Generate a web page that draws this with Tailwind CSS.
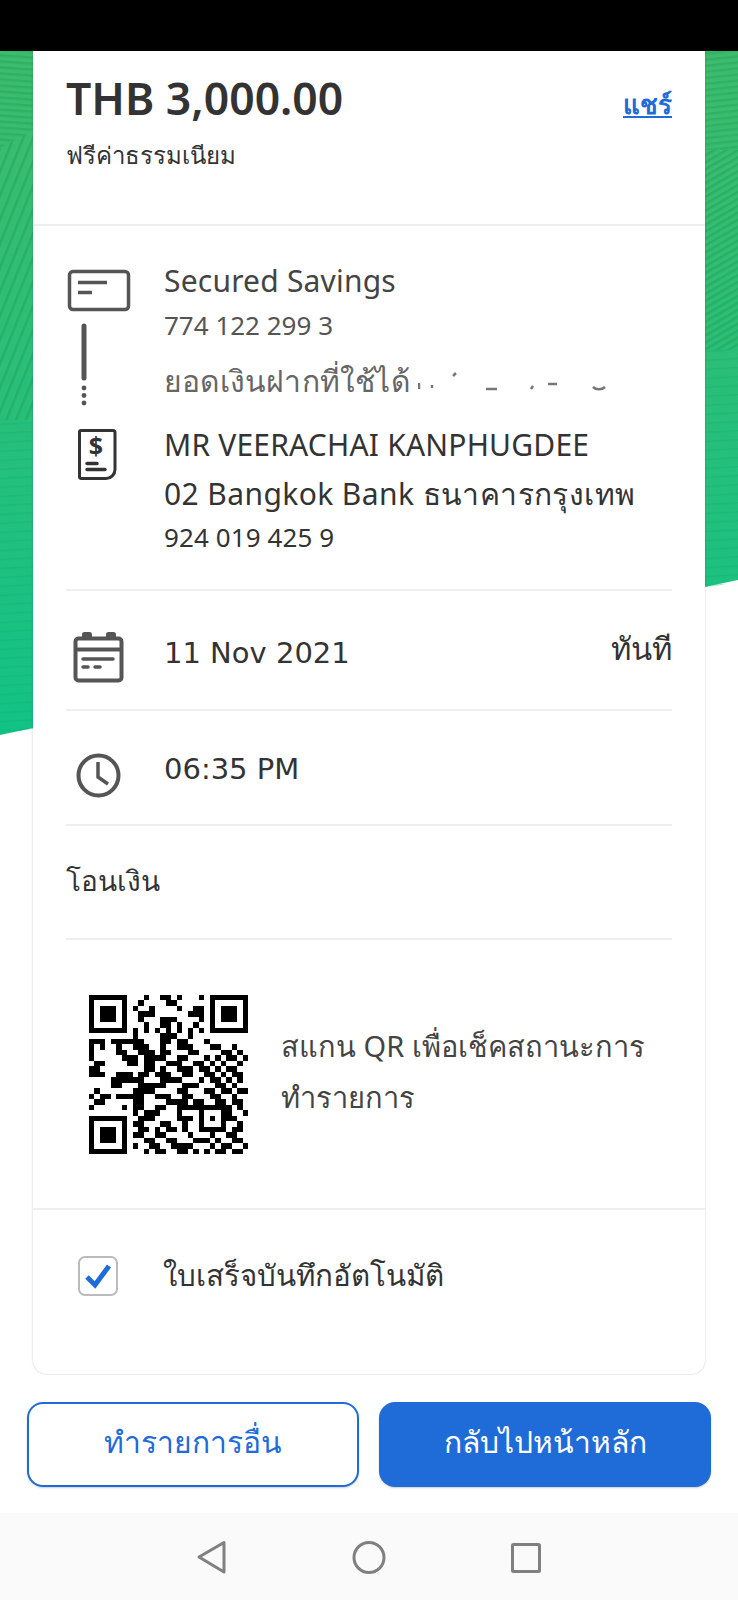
<!DOCTYPE html>
<html lang="th">
<head>
    <meta charset="UTF-8">
    <meta name="viewport" content="width=device-width, initial-scale=1.0">
    <title>โอนเงิน</title>
    <script src="https://cdn.jsdelivr.net/npm/@tailwindcss/browser@4"></script>
</head>
<body class="bg-white">
<div class="relative flex h-[1600px] w-[738px] flex-col overflow-hidden bg-white font-['Noto_Sans','Open_Sans','DejaVu_Sans',sans-serif] text-[#333]">
    <!-- top bar -->
    <div class="relative z-10 h-[51px] shrink-0 bg-black"></div>

    <!-- green background, only the side strips show -->
    <svg class="absolute left-0 top-0" width="738" height="760" viewBox="0 0 738 760">
        <defs>
            <linearGradient id="bgGreen" x1="0" y1="51" x2="0" y2="735" gradientUnits="userSpaceOnUse">
                <stop offset="0" stop-color="#3fbb6c"/>
                <stop offset="1" stop-color="#12c285"/>
            </linearGradient>
            <pattern id="flat" width="6" height="6" patternUnits="userSpaceOnUse" patternTransform="rotate(4)">
                <rect width="6" height="2.5" fill="#1fa95c" fill-opacity="0.55"/>
            </pattern>
            <pattern id="flatR" width="6" height="6" patternUnits="userSpaceOnUse" patternTransform="rotate(-6)">
                <rect width="6" height="2.5" fill="#1fa95c" fill-opacity="0.5"/>
            </pattern>
            <pattern id="steep" width="9" height="9" patternUnits="userSpaceOnUse" patternTransform="rotate(22)">
                <rect width="2.5" height="9" fill="#1fa95c" fill-opacity="0.6"/>
            </pattern>
            <pattern id="diag" width="6" height="6" patternUnits="userSpaceOnUse" patternTransform="rotate(-30)">
                <rect width="6" height="2.5" fill="#1fa95c" fill-opacity="0.6"/>
            </pattern>
            <pattern id="soft" width="9" height="9" patternUnits="userSpaceOnUse" patternTransform="rotate(-3)">
                <rect width="9" height="1.5" fill="#0fae76" fill-opacity="0.35"/>
            </pattern>
        </defs>
        <polygon points="0,51 738,51 738,580 0,735" fill="url(#bgGreen)"/>
        <polygon points="0,51 33,51 33,130 0,148" fill="url(#flat)"/>
        <polygon points="0,148 33,130 33,420 0,420" fill="url(#steep)"/>
        <polygon points="0,420 33,420 33,729 0,735" fill="url(#soft)"/>
        <polygon points="705,51 738,51 738,150 705,150" fill="url(#flatR)"/>
        <polygon points="705,150 738,150 738,350 705,350" fill="url(#diag)"/>
        <polygon points="705,350 738,350 738,580 705,590" fill="url(#soft)"/>
    </svg>

    <!-- card -->
    <main class="relative mx-[33px] flex h-[1323px] shrink-0 flex-col overflow-hidden rounded-b-[14px] bg-white shadow-[0_0_2px_rgba(0,0,0,0.25)]">
        <!-- amount -->
        <section class="flex h-[175px] shrink-0 items-start justify-between border-b-2 border-[#eee] px-[33px] pt-[17px]">
            <div>
                <p class="text-[44.500px] leading-[60px] font-semibold text-[#333]">THB 3,000.00</p>
                <p class="mt-[9px] text-[24px] leading-[36px] text-[#333]">ฟรีค่าธรรมเนียม</p>
            </div>
            <a class="mt-[16px] text-[26px] leading-[40px] font-semibold text-[#1f6bd8] underline underline-offset-2">แชร์</a>
        </section>

        <div class="flex shrink-0 flex-col px-[33px]">
            <!-- from / to -->
            <section class="flex h-[365px] border-b-2 border-[#eee] pt-[35px]">
                <div class="w-[98px] shrink-0">
                    <svg width="66" height="212" viewBox="0 0 66 212" class="mt-[1px] overflow-visible" fill="none">
                        <rect x="3.500" y="9.500" width="59" height="38" rx="3.500" stroke="#555" stroke-width="3.500"/>
                        <path d="M12 20.500h29M12 30.500h14" stroke="#555" stroke-width="3.500"/>
                        <path d="M18 64v52" stroke="#555" stroke-width="5" stroke-linecap="round"/>
                        <circle cx="18" cy="126" r="2.400" fill="#555"/>
                        <circle cx="18" cy="133.500" r="2.400" fill="#555"/>
                        <circle cx="18" cy="141" r="2.400" fill="#555"/>
                        <path d="M15 168.500h32a2 2 0 0 1 2 2v37a9 9 0 0 1-9 9h-25a1.500 1.500 0 0 1-1.500-1.500v-45a1.500 1.500 0 0 1 1.500-1.500z" stroke="#333" stroke-width="3"/>
                        <text x="30" y="193" text-anchor="middle" font-size="25" font-weight="700" fill="#333">$</text>
                        <path d="M21 201.500h10M21 207.500h18" stroke="#333" stroke-width="3.500" stroke-linecap="round"/>
                    </svg>
                </div>
                <div class="min-w-0">
                    <p class="text-[30px] leading-[40px] tracking-[0.2px] text-[#444]">Secured Savings</p>
                    <p class="text-[26px] leading-[48px] text-[#555]">774 122 299 3</p>
                    <div class="relative">
                        <p class="text-[30px] leading-[64px] tracking-[0.2px] text-[#666]">ยอดเงินฝากที่ใช้ได้</p>
                        <svg class="absolute left-[254px] top-[21px]" width="192" height="22" viewBox="0 0 192 22" fill="none" stroke="#777" stroke-width="2.500">
                            <path d="M1 13v6M14 15v3M38 3l-3 3M68 19h11M115 16l-2 3M130 14h9M175 17c3 3 9 3 12 0"/>
                        </svg>
                    </div>
                    <p class="mt-[1px] text-[30px] leading-[62px] tracking-[0.2px] text-[#333]">MR VEERACHAI KANPHUGDEE</p>
                    <p class="text-[30px] leading-[36px] tracking-[0.4px] text-[#333]">02 Bangkok Bank ธนาคารกรุงเทพ</p>
                    <p class="text-[26px] leading-[51px] tracking-[0.1px] text-[#333]">924 019 425 9</p>
                </div>
            </section>

            <!-- date -->
            <section class="flex h-[120px] items-start justify-between border-b-2 border-[#eee]">
                <div class="flex">
                    <div class="w-[98px] shrink-0 pt-[41px]">
                        <svg width="66" height="50" viewBox="0 0 66 50" fill="none" class="overflow-visible">
                            <rect x="9.500" y="6.500" width="46" height="42" rx="3" stroke="#555" stroke-width="4"/>
                            <path d="M8 17.500h49" stroke="#555" stroke-width="4"/>
                            <rect x="16" y="0" width="10" height="8" rx="2.500" fill="#555"/>
                            <rect x="40" y="0" width="10" height="8" rx="2.500" fill="#555"/>
                            <path d="M17 27h30" stroke="#555" stroke-width="3.500" stroke-linecap="round"/>
                            <path d="M17 35h5M29 35h5" stroke="#555" stroke-width="3.500" stroke-linecap="round"/>
                        </svg>
                    </div>
                    <p class="pt-[42px] font-['DejaVu_Sans',sans-serif] text-[29px] leading-[40px] text-[#333]">11 Nov 2021</p>
                </div>
                <p class="pt-[36px] text-[31px] leading-[42px] text-[#333]">ทันที</p>
            </section>

            <!-- time -->
            <section class="flex h-[115px] border-b-2 border-[#eee]">
                <div class="w-[98px] shrink-0 pt-[42px]">
                    <svg width="66" height="44" viewBox="0 0 66 44" fill="none" class="overflow-visible">
                        <circle cx="32.500" cy="22.500" r="20" stroke="#555" stroke-width="4"/>
                        <path d="M32 9v15l10 7" stroke="#555" stroke-width="3.500"/>
                    </svg>
                </div>
                <p class="pt-[38px] font-['DejaVu_Sans',sans-serif] text-[29px] leading-[40px] text-[#333]">06:35 PM</p>
            </section>

            <!-- type -->
            <section class="flex h-[114px] items-center border-b-2 border-[#eee] pb-[5px]">
                <p class="text-[28px] leading-[44px] text-[#333]">โอนเงิน</p>
            </section>
        </div>

        <!-- qr -->
        <section class="flex h-[270px] shrink-0 items-start border-b-2 border-[#eee] pl-[56px] pr-[33px] pt-[55px]">
            <svg width="159" height="159" viewBox="0 0 29 29" shape-rendering="crispEdges" class="shrink-0">
                <path id="qr" fill="#000"/>
            </svg>
            <div class="ml-[33px] pt-[25px] text-[29px] leading-[51px] text-[#444]">
                <p>สแกน QR เพื่อเช็คสถานะการ</p>
                <p>ทำรายการ</p>
            </div>
        </section>

        <!-- auto receipt -->
        <section class="flex flex-1 items-start px-[45px] pt-[46px]">
            <span class="flex h-[40px] w-[40px] shrink-0 items-center justify-center rounded-[7px] border-2 border-[#bbb] bg-white">
                <svg width="30" height="30" viewBox="0 0 30 30" fill="none">
                    <path d="M4 16l8 8L26 5" stroke="#1f6bd8" stroke-width="5"/>
                </svg>
            </span>
            <p class="ml-[45px] text-[29.500px] leading-[38px] text-[#333]">ใบเสร็จบันทึกอัตโนมัติ</p>
        </section>
    </main>

    <!-- buttons -->
    <div class="relative mt-[28px] flex h-[85px] shrink-0 gap-[20px] px-[27px]">
        <button class="h-full w-[332px] rounded-[16px] border-2 border-[#1f6bd8] bg-white pb-[6px] text-[30px] text-[#1f6bd8] shadow-[0_1px_2px_rgba(0,0,0,0.2)]">ทำรายการอื่น</button>
        <button class="h-full w-[332px] rounded-[16px] bg-[#1f6bd8] pb-[6px] text-[30px] text-white shadow-[0_1px_2px_rgba(0,0,0,0.2)]">กลับไปหน้าหลัก</button>
    </div>

    <!-- android nav -->
    <nav class="relative mt-[26px] flex flex-1 items-center justify-center bg-[#fafafa]">
        <svg width="738" height="87" viewBox="0 0 738 87" fill="none" stroke="#808080" stroke-width="3" stroke-linejoin="round">
            <path d="M224 29.500v29.500L199 44z"/>
            <circle cx="369" cy="44.500" r="15"/>
            <rect x="512.500" y="31.500" width="27" height="27" rx="1"/>
        </svg>
    </nav>
</div>

<script>
    // qr modules, row by row (spaces only group the columns)
    const rows = [
        "11111110 0010011010001 01111111",
        "10000010 0100001100000 01000001",
        "10111010 1001000010011 01011101",
        "10111010 0111000000111 01011101",
        "10111010 0100011100001 01011101",
        "10000010 0010011010010 01000001",
        "11111110 1010101010101 01111111",
        "00000000 1000011100100 00000000",
        "11101111 1100011011000 10000000",
        "10100100 1110010011100 01100100",
        "10000110 0111011000110 00011010",
        "10000011 1011110011000 10101101",
        "01100001 1011001110011 01010010",
        "11000000 0011010011101 10101100",
        "11100111 0110111001100 11010110",
        "00001111 1100011110001 01101010",
        "00001100 0111110001110 00110100",
        "01000000 1111000011000 11011011",
        "10110111 1100111001100 01100100",
        "01100000 1100001111011 00110110",
        "10000010 1100110011111 11111010",
        "00000000 1011100010001 00011001",
        "11111110 0111000011101 01011100",
        "10000010 1100011001001 00010010",
        "10111010 0110101101001 11110110",
        "10111010 1100110000100 01001100",
        "10111010 0011001100011 10100110",
        "10000010 1001100111100 01011001",
        "11111110 0010110011010 10110110"
    ];
    let d = "";
    rows.forEach((row, y) => {
        [...row.replaceAll(" ", "")].forEach((cell, x) => {
            if (cell === "1") d += `M${x} ${y}h1v1h-1z`;
        });
    });
    document.getElementById("qr").setAttribute("d", d);
</script>
</body>
</html>
